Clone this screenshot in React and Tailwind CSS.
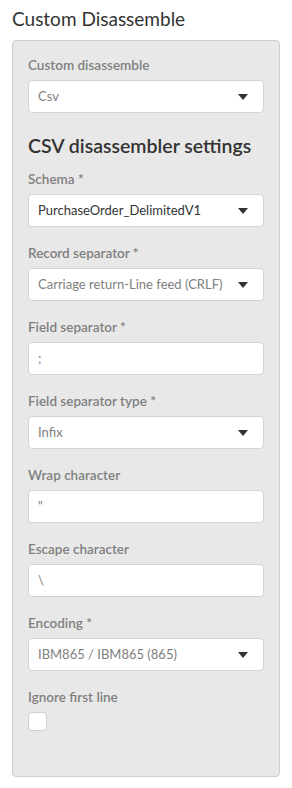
const Caret = () => (
  <svg width="10" height="6" viewBox="0 0 10 6" className="shrink-0">
    <path d="M0 0 L10 0 L5 6 Z" fill="#333" />
  </svg>
);

const Label = ({ children }) => (
  <div className="h-5 leading-5 text-[13.5px] font-semibold text-[#808080] mb-[5px]">{children}</div>
);

const SelectField = ({ label, value, dark }) => (
  <div className="mb-4">
    <Label>{label}</Label>
    <div className="h-[33px] bg-white border border-[#d4d4d4] rounded-[4px] flex items-center justify-between pl-[9px] pr-[15px] gap-2">
      <span className={"text-[13px] whitespace-nowrap overflow-hidden " + (dark ? "text-[#333]" : "text-[#808080]")}>{value}</span>
      <Caret />
    </div>
  </div>
);

const TextField = ({ label, value }) => (
  <div className="mb-4">
    <Label>{label}</Label>
    <div className="h-[33px] bg-white border border-[#d4d4d4] rounded-[4px] flex items-center pl-[9px]">
      <span className="text-[13px] text-[#808080]">{value}</span>
    </div>
  </div>
);

export default function App() {
  return (
    <div className="w-[292px] h-[788px] bg-white px-3 pt-[6px]" style={{ fontFamily: "'Lato', 'Noto Sans', sans-serif" }}>
      <h1 className="text-[19px] leading-[26px] text-[#333] font-normal mb-[8px]">Custom Disassemble</h1>
      <div className="bg-[#e8e8e8] border border-[#cfcfcf] rounded-[4px] px-[15px] pt-[14px] h-[737px]">
        <SelectField label="Custom disassemble" value="Csv" />
        <h2 className="text-[19.5px] leading-[26px] text-[#333] font-semibold mt-[20px] mb-[10px]">CSV disassembler settings</h2>
        <SelectField label="Schema *" value="PurchaseOrder_DelimitedV1" dark />
        <SelectField label="Record separator *" value="Carriage return-Line feed (CRLF)" />
        <TextField label="Field separator *" value=";" />
        <SelectField label="Field separator type *" value="Infix" />
        <TextField label="Wrap character" value={'"'} />
        <TextField label="Escape character" value="\" />
        <SelectField label="Encoding *" value="IBM865 / IBM865 (865)" />
        <div>
          <Label>Ignore first line</Label>
          <div className="w-[19px] h-[19px] bg-white border border-[#cfcfcf] rounded-[4px]" />
        </div>
      </div>
    </div>
  );
}
